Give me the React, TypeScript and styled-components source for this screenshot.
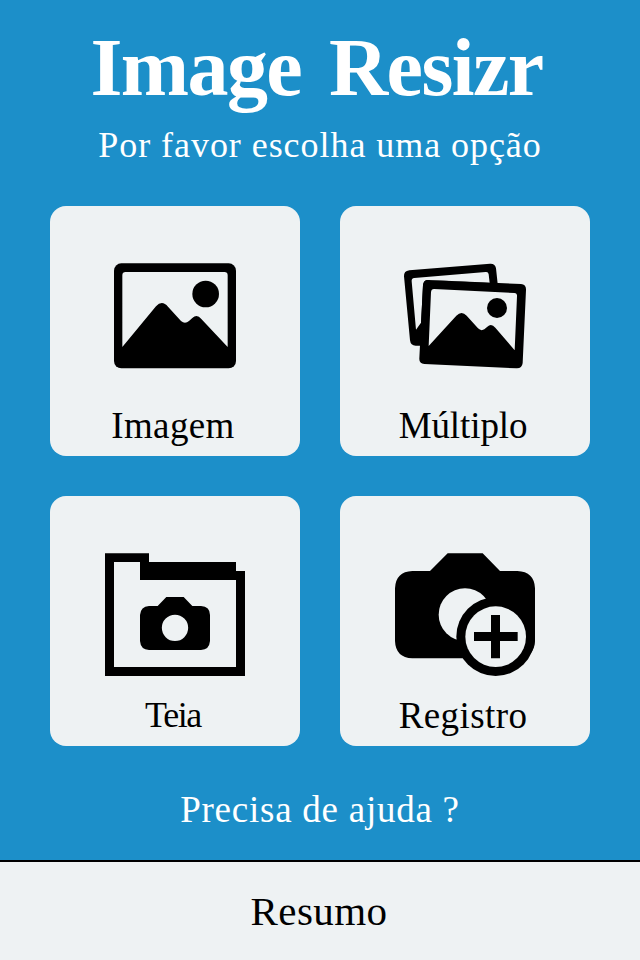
import React from "react";
import styled, { createGlobalStyle } from "styled-components";

const GlobalStyle = createGlobalStyle`
  * { box-sizing: border-box; }
  body { margin: 0; background: #1c8fc9; }
`;

const Page = styled.main`
  display: flex;
  flex-direction: column;
  width: 640px;
  height: 960px;
  overflow: hidden;
  background: #1c8fc9;
  font-family: "Liberation Serif", "Times New Roman", serif;
  white-space: nowrap;
`;

const Header = styled.header`
  height: 206px;
  padding-top: 20px;
  color: #fff;
  text-align: center;
`;

const Title = styled.h1`
  margin: 0;
  padding-right: 7px;
  font-size: 82px;
  line-height: 96px;
  font-weight: 700;
  letter-spacing: -1.6px;
  word-spacing: 9px;
`;

const Subtitle = styled.p`
  margin: 0;
  font-size: 36px;
  line-height: 58px;
  letter-spacing: 0.95px;
`;

const Grid = styled.section`
  display: grid;
  grid-template-columns: 250px 250px;
  grid-auto-rows: 250px;
  gap: 40px;
  justify-content: center;
`;

const Card = styled.button`
  display: flex;
  flex-direction: column;
  align-items: center;
  padding: 0;
  border: 0;
  border-radius: 16px;
  background: #eef2f3;
  color: #000;
  font: inherit;
`;

const IconSlot = styled.span`
  display: block;
  height: 193px;
  padding-top: 44px;

  svg { display: block; }
`;

const Label = styled.span<{ $size: number; $spacing: number }>`
  padding-right: 4px;
  font-size: ${({ $size }) => $size}px;
  line-height: 53px;
  letter-spacing: ${({ $spacing }) => $spacing}px;
`;

const Help = styled.p`
  height: 114px;
  margin: 0;
  padding-top: 12px;
  color: #fff;
  font-size: 37px;
  line-height: 103px;
  letter-spacing: 0.75px;
  text-align: center;
`;

const Footer = styled.footer`
  height: 100px;
  padding-right: 2px;
  border-top: 2px solid #000;
  background: #eef2f3;
  color: #000;
  font-size: 41px;
  line-height: 98px;
  letter-spacing: 0.4px;
  text-align: center;
`;

const PAPER = "#eef2f3";

const ImageIcon = () => (
  <svg width="150" height="130" viewBox="0 0 450 390">
    <rect x="42" y="40" width="366" height="315" rx="22" />
    <path
      fill={PAPER}
      d="M67 291V76Q67 66 77 66H373Q383 66 383 76V291L304 207Q291 190 277 204L267 213Q255 224 243 213L204 170Q186 148 168 169Z"
    />
    <circle cx="317" cy="132" r="40" />
  </svg>
);

const MultipleIcon = () => (
  <svg width="150" height="130" viewBox="0 0 450 390">
    <path d="M58 61L300 41Q316 40 318 55L323 101L119 90L93 287L77 287Q62 287 60 271L42 79Q41 63 58 61Z" />
    <path fill={PAPER} d="M73 84L287 66Q295 65 296 73L299 99L116 90Q101 89 99 106L93 218L78 239L65 94Q64 85 73 84Z" />
    <path d="M115 90L393 102Q409 103 408 120L398 339Q396 356 379 355L103 342Q87 340 88 325L99 105Q101 89 115 90Z" />
    <path
      fill={PAPER}
      d="M132 117L373 129Q382 130 381 139L374 301L316 233Q304 219 292 230L283 238Q273 244 264 235L230 197Q215 181 199 197L116 288L123 127Q124 117 132 117Z"
    />
    <circle cx="321" cy="174" r="30" />
  </svg>
);

const FolderIcon = () => (
  <svg width="160" height="145" viewBox="0 0 480 435">
    <path
      fillRule="evenodd"
      d="M30 40H162V66H423V93H450V408H30ZM57 66V381H423V120H135V66Z"
    />
    <path
      fillRule="evenodd"
      d="M188 198L214 171H266L292 198H318Q345 200 345 225V303Q343 329 318 330H162Q137 329 135 303V225Q137 200 162 198ZM240 224A39.5 39.5 0 1 0 240 303A39.5 39.5 0 1 0 240 224Z"
    />
  </svg>
);

const CaptureIcon = () => (
  <svg width="160" height="145" viewBox="0 0 480 435">
    <path d="M135 93L188 40H293L345 93H397Q448 95 450 145V303Q448 353 397 355H82Q32 353 30 303V145Q32 95 82 93Z" />
    <circle cx="240" cy="224" r="79" fill={PAPER} />
    <circle cx="332" cy="290" r="118" />
    <circle cx="332" cy="290" r="91" fill={PAPER} />
    <path d="M318 225H345V276H398V303H345V355H318V303H267V276H318Z" />
  </svg>
);

const options = [
  { label: "Imagem", size: 37, spacing: 0.4, Icon: ImageIcon },
  { label: "Múltiplo", size: 37, spacing: -0.1, Icon: MultipleIcon },
  { label: "Teia", size: 36, spacing: -1.4, Icon: FolderIcon },
  { label: "Registro", size: 37, spacing: 0.4, Icon: CaptureIcon },
];

export default function App() {
  return (
    <Page>
      <GlobalStyle />
      <Header>
        <Title>Image Resizr</Title>
        <Subtitle>Por favor escolha uma opção</Subtitle>
      </Header>
      <Grid>
        {options.map(({ label, size, spacing, Icon }) => (
          <Card key={label} type="button">
            <IconSlot>
              <Icon />
            </IconSlot>
            <Label $size={size} $spacing={spacing}>{label}</Label>
          </Card>
        ))}
      </Grid>
      <Help>Precisa de ajuda ?</Help>
      <Footer>Resumo</Footer>
    </Page>
  );
}
